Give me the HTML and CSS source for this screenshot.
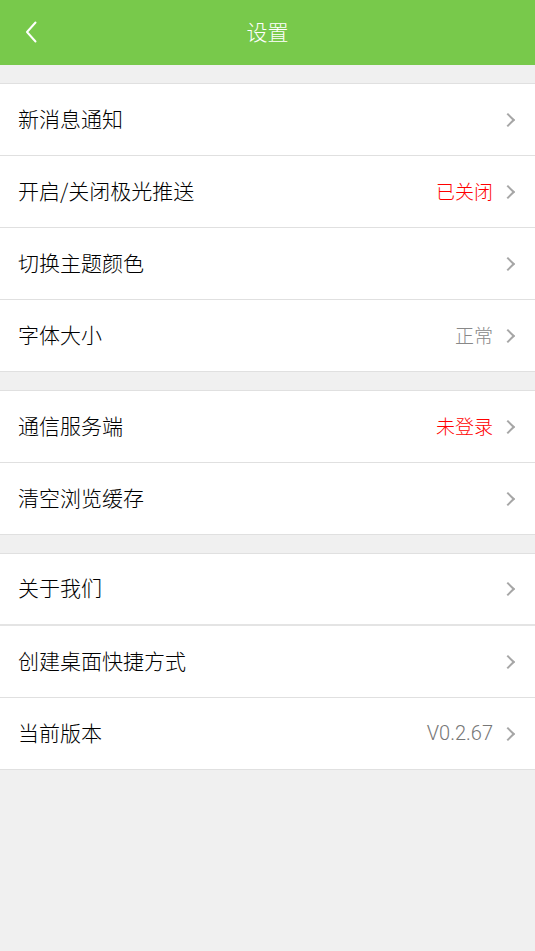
FILE: index.html
```html
<!DOCTYPE html>
<html lang="zh-CN">
<head>
<meta charset="utf-8">
<title>设置</title>
<link rel="stylesheet" href="styles.css">
</head>
<body>
<header class="topbar">
  <span class="back">
    <svg width="14" height="24" viewBox="0 0 14 24"><path d="M11.5 2.5 L3 12 L11.5 21.5" fill="none" stroke="#fff" stroke-width="2" stroke-linecap="round" stroke-linejoin="round"/></svg>
  </span>
  <h1 class="title">设置</h1>
</header>
<main class="content">
  <section class="group">
    <div class="row"><span class="label">新消息通知</span><span class="right"><span class="chev"></span></span></div>
    <div class="row"><span class="label">开启/关闭极光推送</span><span class="right"><span class="value red">已关闭</span><span class="chev"></span></span></div>
    <div class="row"><span class="label">切换主题颜色</span><span class="right"><span class="chev"></span></span></div>
    <div class="row"><span class="label">字体大小</span><span class="right"><span class="value">正常</span><span class="chev"></span></span></div>
  </section>
  <section class="group">
    <div class="row"><span class="label">通信服务端</span><span class="right"><span class="value red">未登录</span><span class="chev"></span></span></div>
    <div class="row"><span class="label">清空浏览缓存</span><span class="right"><span class="chev"></span></span></div>
  </section>
  <section class="group">
    <div class="row double"><span class="label">关于我们</span><span class="right"><span class="chev"></span></span></div>
    <div class="row"><span class="label">创建桌面快捷方式</span><span class="right"><span class="chev"></span></span></div>
    <div class="row"><span class="label">当前版本</span><span class="right"><span class="value ver">V0.2.67</span><span class="chev"></span></span></div>
  </section>
</main>
</body>
</html>
```
FILE: styles.css
```css
html, body {
  margin: 0;
  padding: 0;
  background: #f0f0f0;
  font-family: "Noto Sans CJK SC", "Noto Sans", sans-serif;
}
.topbar {
  height: 65px;
  background: #78c94b;
  display: flex;
  align-items: center;
  justify-content: center;
  position: relative;
}
.back {
  position: absolute;
  left: 24px;
  top: 20px;
  width: 14px;
  height: 24px;
  display: flex;
}
.title {
  margin: 0;
  color: #fff;
  font-size: 21px;
  font-weight: 300;
  line-height: 1;
  padding-bottom: 2px;
}
.content {
  padding-top: 18px;
  display: flex;
  flex-direction: column;
  gap: 18px;
}
.group {
  background: #fff;
  border-top: 1px solid #e0e0e0;
}
.row {
  height: 71px;
  border-bottom: 1px solid #e0e0e0;
  display: flex;
  align-items: center;
  justify-content: space-between;
  padding: 0 18px;
}
.row.double {
  height: 70px;
  border-bottom: 2px solid #e4e4e4;
}
.label {
  font-size: 21px;
  font-weight: 300;
  color: #000;
  line-height: 1;
  padding-bottom: 3px;
}
.right {
  display: flex;
  align-items: center;
}
.value {
  font-size: 19px;
  font-weight: 300;
  color: #888;
  line-height: 1;
  margin-right: 10px;
  padding-bottom: 3px;
}
.value.red {
  color: #f00;
}
.value.ver {
  font-family: "Roboto", "Noto Sans", sans-serif;
  font-size: 20px;
  font-weight: 300;
  color: #777;
  padding-bottom: 2px;
}
.chev {
  width: 8px;
  height: 8px;
  border-top: 2px solid #a6a6a6;
  border-right: 2px solid #a6a6a6;
  transform: rotate(45deg);
  margin-right: 4px;
}
```
